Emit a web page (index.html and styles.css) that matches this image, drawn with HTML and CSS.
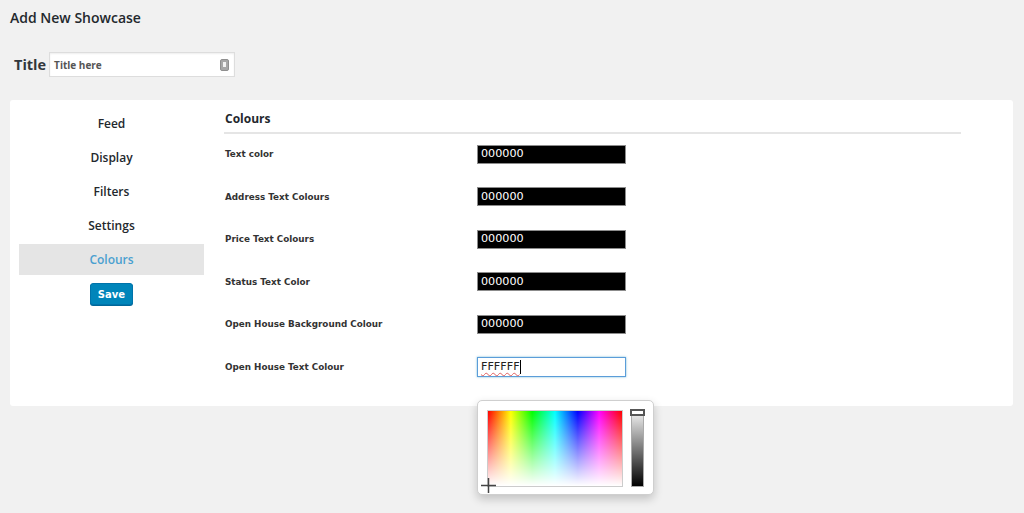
FILE: index.html
```html
<!DOCTYPE html>
<html>
<head>
<meta charset="utf-8">
<title>Add New Showcase</title>
<link rel="stylesheet" href="styles.css">
</head>
<body>
<div class="wrap">
  <h1 class="page-title">Add New Showcase</h1>
  <div class="title-row">
    <label class="title-label">Title</label>
    <div class="title-input">
      <span class="placeholder">Title here</span>
      <svg class="pw-icon" width="9" height="12" viewBox="0 0 9 12"><rect x="0.5" y="0.5" width="8" height="11" rx="1.5" fill="#a7a7a7" stroke="#8f8f8f"/><rect x="3" y="3" width="3" height="5" fill="#f2f2f2"/></svg>
    </div>
  </div>
  <div class="panel">
    <nav class="tabs">
      <div class="tab">Feed</div>
      <div class="tab">Display</div>
      <div class="tab">Filters</div>
      <div class="tab">Settings</div>
      <div class="tab active">Colours</div>
      <div class="save-wrap"><button class="save">Save</button></div>
    </nav>
    <section class="content">
      <h2 class="section-title">Colours</h2>
      <div class="fields">
        <div class="label">Text color</div><div class="color dark">000000</div>
        <div class="label">Address Text Colours</div><div class="color dark">000000</div>
        <div class="label">Price Text Colours</div><div class="color dark">000000</div>
        <div class="label">Status Text Color</div><div class="color dark">000000</div>
        <div class="label">Open House Background Colour</div><div class="color dark">000000</div>
        <div class="label">Open House Text Colour</div>
        <div class="color light focus"><span class="typed">FFFFFF</span><span class="caret"></span></div>
      </div>
    </section>
    <div class="picker">
      <div class="sv">
        <div class="sv-white"></div>
        <svg class="cross" width="15" height="15" viewBox="0 0 15 15"><path d="M7.5 0v15M0 7.5h15" stroke="#444" stroke-width="1.5"/></svg>
      </div>
      <div class="slider"><div class="handle"></div></div>
    </div>
  </div>
</div>
</body>
</html>
```
FILE: styles.css
```css
html, body {
  margin: 0;
  padding: 0;
  background: #f1f1f1;
}
body {
  font-family: "Open Sans", "Liberation Sans", sans-serif;
  color: #23282d;
  min-height: 513px;
}
.wrap {
  padding: 0 11px 110px 10px;
}
.page-title {
  margin: 0;
  padding-top: 8px;
  font-size: 14px;
  font-weight: 600;
  line-height: 20px;
  color: #23282d;
}
.title-row {
  display: flex;
  align-items: center;
  margin-top: 24px;
  padding-left: 4px;
  gap: 3px;
}
.title-label {
  font-size: 14.5px;
  font-weight: 700;
  color: #32373c;
}
.title-input {
  height: 23px;
  background: #fff;
  border: 1px solid #ddd;
  box-shadow: inset 0 1px 2px rgba(0,0,0,0.07);
  display: flex;
  align-items: center;
  justify-content: space-between;
  padding: 0 5px 0 4px;
  box-sizing: content-box;
  width: 175px;
}
.placeholder {
  font-size: 10px;
  font-weight: 700;
  color: #555;
}
.pw-icon {
  display: block;
  margin-top: 1px;
}
.panel {
  margin-top: 23px;
  background: #fff;
  border-radius: 3px;
  display: flex;
  height: 306px;
  position: relative;
}
.tabs {
  width: 185px;
  margin-left: 9px;
  padding-top: 8px;
  display: flex;
  flex-direction: column;
  gap: 3px;
}
.tab {
  height: 31px;
  line-height: 31px;
  text-align: center;
  font-size: 12px;
  font-weight: 600;
  color: #23282d;
}
.tab.active {
  background: #e5e5e5;
  color: #4aa0d0;
}
.save-wrap {
  display: flex;
  justify-content: center;
  padding-top: 5px;
}
.save {
  width: 43px;
  height: 22px;
  padding: 0;
  background: #0085ba;
  border: 1px solid #0073aa;
  border-radius: 3px;
  color: #fff;
  font-family: "DejaVu Sans", Verdana, sans-serif;
  font-weight: 700;
  font-size: 10px;
  box-shadow: 0 1px 0 #006799;
}
.content {
  margin-left: 20px;
  width: 737px;
}
.section-title {
  margin: 0;
  padding: 10px 0 4px 1px;
  font-size: 12px;
  font-weight: 700;
  line-height: 18px;
  color: #23282d;
  border-bottom: 2px solid #e5e5e5;
}
.fields {
  display: grid;
  grid-template-columns: 253px 149px;
  grid-auto-rows: 20px;
  row-gap: 22.6px;
  align-items: center;
  margin-top: 10px;
}
.label {
  font-family: "DejaVu Sans", Verdana, sans-serif;
  font-size: 8.8px;
  font-weight: 700;
  color: #333;
  padding-left: 1px;
}
.color {
  height: 20px;
  box-sizing: border-box;
  font-family: "DejaVu Sans", Verdana, sans-serif;
  font-size: 11.2px;
  line-height: 18px;
  padding-left: 3px;
  display: flex;
  align-items: center;
}
.color.dark {
  background: #000;
  color: #fff;
  border: 1px solid #8c8c8c;
  height: 19px;
}
.color.light {
  background: #fff;
  color: #222;
  border: 1px solid #5b9dd9;
  box-shadow: 0 0 2px rgba(30,140,190,0.6);
}
.typed {
  text-decoration: underline wavy #e06060;
  text-decoration-thickness: 1px;
  text-underline-offset: 2px;
}
.caret {
  display: inline-block;
  width: 1px;
  height: 14px;
  background: #000;
}
.picker {
  position: absolute;
  left: 467px;
  top: 300px;
  width: 177px;
  height: 95px;
  background: #fff;
  border: 1px solid #cfcfcf;
  border-radius: 5px;
  box-shadow: 0 4px 10px rgba(0,0,0,0.2);
  box-sizing: border-box;
  z-index: 5;
}
.sv {
  position: absolute;
  left: 9px;
  top: 9px;
  width: 136px;
  height: 77px;
  border: 1px solid #ccc;
  box-sizing: border-box;
  background: linear-gradient(to right, #ff0000 0%, #ffff00 17%, #00ff00 33%, #00ffff 50%, #0000ff 67%, #ff00ff 83%, #ff0000 100%);
}
.sv-white {
  position: absolute;
  inset: 0;
  background: linear-gradient(to bottom, rgba(255,255,255,0) 0%, #fff 100%);
}
.cross {
  position: absolute;
  left: -7px;
  bottom: -7px;
}
.slider {
  position: absolute;
  left: 153px;
  top: 9px;
  width: 13px;
  height: 77px;
  border: 1px solid #aaa;
  box-sizing: border-box;
  background: linear-gradient(to bottom, #f4f4f4 0%, #000 100%);
}
.handle {
  position: absolute;
  left: -2px;
  top: -2px;
  width: 15px;
  height: 7px;
  border: 2px solid #555;
  background: #fff;
  box-sizing: border-box;
}
```
